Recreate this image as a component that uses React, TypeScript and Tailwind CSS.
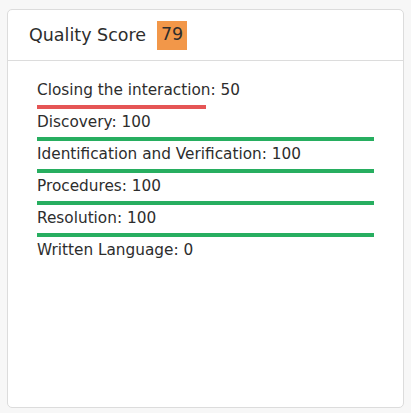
const scores = [
  { label: 'Closing the interaction', value: 50 },
  { label: 'Discovery', value: 100 },
  { label: 'Identification and Verification', value: 100 },
  { label: 'Procedures', value: 100 },
  { label: 'Resolution', value: 100 },
  { label: 'Written Language', value: 0 },
];

export default function App() {
  return (
    <div className="w-[411px] h-[413px] bg-[#f7f7f7] p-[7px] pt-[9px] font-['DejaVu_Sans',sans-serif] text-[#2d2d2d]">
      <div className="h-[399px] bg-white border border-[#dcdcdc] rounded-[5px] flex flex-col">
        {/* header */}
        <div className="h-[51px] border-b border-[#dcdcdc] flex items-center pl-[21px] gap-[11px]">
          <span className="text-[17.5px] leading-none pt-[2px]">Quality Score</span>
          <span className="w-[30px] h-[29px] bg-[#f29749] flex items-center justify-center text-[17.5px] leading-none">
            79
          </span>
        </div>

        {/* score rows */}
        <div className="pt-[20px] pl-[29px] pr-[29px] flex flex-col">
          {scores.map((s) => (
            <div key={s.label} className="flex flex-col">
              <div className="h-[20px] flex items-center text-[15.3px] leading-none">
                {s.label}: {s.value}
              </div>
              {s.value > 0 && (
                <div className="mt-[4px] mb-[4px] h-[4px]">
                  <div
                    className={s.value < 75 ? 'h-full bg-[#e55555]' : 'h-full bg-[#27ae60]'}
                    style={{ width: `${s.value}%` }}
                  />
                </div>
              )}
            </div>
          ))}
        </div>
      </div>
    </div>
  );
}
